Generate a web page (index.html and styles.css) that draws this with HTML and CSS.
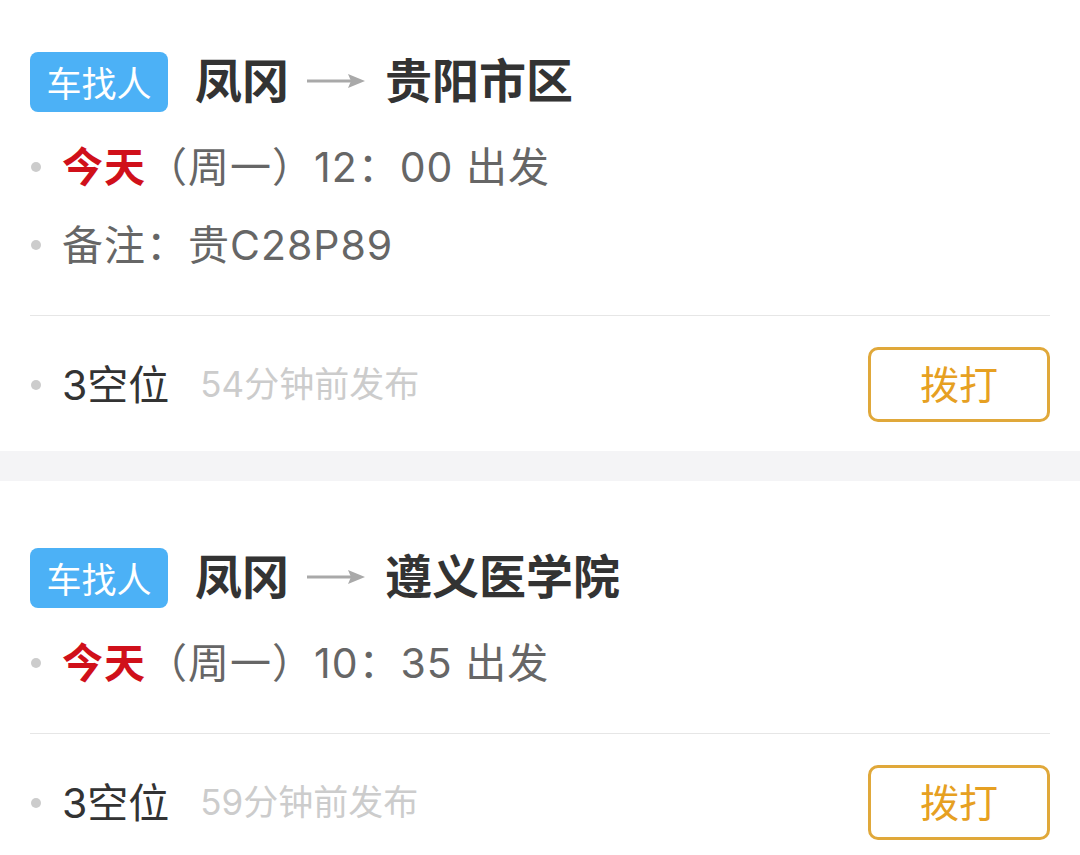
FILE: index.html
```html
<!DOCTYPE html>
<html lang="zh-CN">
<head>
<meta charset="utf-8">
<title>拼车</title>
<link rel="stylesheet" href="styles.css">
</head>
<body>
<div class="list">
  <div class="card card-first">
    <div class="head">
      <span class="tag">车找人</span>
      <span class="place">凤冈</span>
      <svg class="arrow" width="58" height="20" viewBox="0 0 58 20"><path d="M0 10 H50" stroke="#a9a9a9" stroke-width="3"/><path d="M41 3 L58 10 L41 17 L44 10 Z" fill="#a9a9a9"/></svg>
      <span class="place">贵阳市区</span>
    </div>
    <ul class="info">
      <li><span class="today">今天</span>（周一）12：00 出发</li>
      <li>备注：贵C28P89</li>
    </ul>
    <div class="divider"></div>
    <div class="foot">
      <span class="seats">3空位</span>
      <span class="time">54分钟前发布</span>
      <button class="call">拨打</button>
    </div>
  </div>
  <div class="gap"></div>
  <div class="card card-second">
    <div class="head">
      <span class="tag">车找人</span>
      <span class="place">凤冈</span>
      <svg class="arrow" width="58" height="20" viewBox="0 0 58 20"><path d="M0 10 H50" stroke="#a9a9a9" stroke-width="3"/><path d="M41 3 L58 10 L41 17 L44 10 Z" fill="#a9a9a9"/></svg>
      <span class="place">遵义医学院</span>
    </div>
    <ul class="info">
      <li><span class="today">今天</span>（周一）10：35 出发</li>
    </ul>
    <div class="divider"></div>
    <div class="foot">
      <span class="seats">3空位</span>
      <span class="time">59分钟前发布</span>
      <button class="call">拨打</button>
    </div>
  </div>
</div>
</body>
</html>
```
FILE: styles.css
```css
html, body {
  margin: 0;
  padding: 0;
  background: #ffffff;
}
body {
  font-family: Inter, "Noto Sans CJK SC", "Noto Sans", sans-serif;
  overflow: hidden;
}
.list {
  width: 1080px;
}
.card {
  background: #ffffff;
  padding: 0 30px;
}
.card-first {
  padding-top: 52px;
}
.card-second {
  padding-top: 67px;
}
.head {
  display: flex;
  align-items: center;
  height: 60px;
}
.tag {
  display: flex;
  align-items: center;
  justify-content: center;
  width: 138px;
  height: 60px;
  background: #4cb1f6;
  border-radius: 8px;
  color: #ffffff;
  font-family: "Noto Sans CJK SC", sans-serif;
  font-size: 35px;
  line-height: 1;
  margin-right: 27px;
  padding-bottom: 2px;
  box-sizing: border-box;
}
.place {
  font-family: "Noto Sans CJK SC", sans-serif;
  font-size: 47px;
  font-weight: 700;
  color: #333333;
  line-height: 1;
  padding-bottom: 10px;
}
.arrow {
  margin: 0 20px 0 18px;
  padding-bottom: 3px;
}
.info {
  list-style: none;
  margin: 16px 0 0;
  padding: 0;
}
.info li {
  display: flex;
  align-items: center;
  height: 78px;
  box-sizing: border-box;
  padding-bottom: 6px;
  font-size: 41px;
  letter-spacing: 1px;
  color: #666666;
  white-space: pre;
}
.info li::before,
.seats::before {
  content: "";
  width: 10px;
  height: 10px;
  border-radius: 50%;
  background: #cccccc;
  margin: 6px 21px 0 1px;
  flex: none;
}
.today {
  font-family: "Noto Sans CJK SC", sans-serif;
  color: #d0101a;
  font-weight: 700;
}
.divider {
  height: 1px;
  background: #e6e6e6;
  margin-top: 31px;
}
.foot {
  display: flex;
  align-items: center;
  padding: 31px 0 29px;
}
.seats {
  display: flex;
  align-items: center;
  font-size: 41px;
  color: #333333;
  padding-bottom: 6px;
}
.time {
  font-size: 35px;
  color: #cccccc;
  margin-left: 31px;
  padding-bottom: 6px;
}
.call {
  margin-left: auto;
  width: 182px;
  height: 75px;
  box-sizing: border-box;
  border: 3px solid #e0a83a;
  border-radius: 10px;
  background: #ffffff;
  color: #e6a022;
  font-family: "Noto Sans CJK SC", "Noto Sans", sans-serif;
  font-size: 39px;
  padding: 0 0 6px;
}
.gap {
  height: 30px;
  background: #f4f4f6;
}
```
